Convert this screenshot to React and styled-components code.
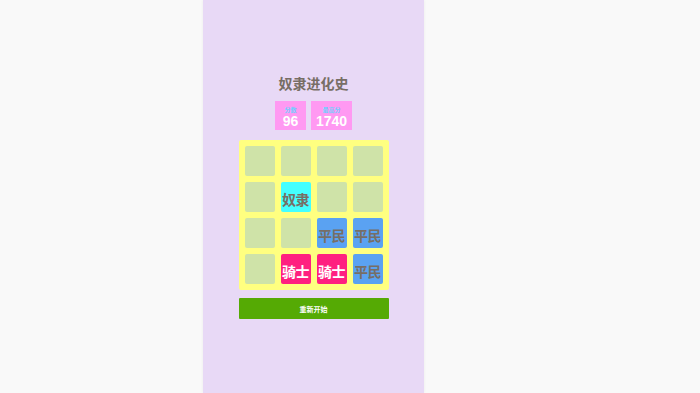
import React from 'react';
import styled, { createGlobalStyle } from 'styled-components';

const GlobalStyle = createGlobalStyle`
  html, body {
    margin: 0;
    padding: 0;
    background: #f9f9f9;
    font-family: "Noto Sans CJK SC", "Liberation Sans", sans-serif;
  }
`;

const Page = styled.div`
  height: 393px;
  display: flex;
  padding-left: 203px;
`;

const Panel = styled.div`
  width: 221px;
  height: 393px;
  background: #e8d9f6;
  box-shadow: 0 0 3px rgba(0, 0, 0, 0.06);
  display: flex;
  flex-direction: column;
  align-items: center;
  padding-top: 72px;
  box-sizing: border-box;
`;

const Title = styled.h1`
  margin: 0;
  font-size: 14px;
  line-height: 22px;
  font-weight: bold;
  color: #776e65;
`;

const Scores = styled.div`
  display: flex;
  gap: 5px;
  margin-top: 7px;
`;

const ScoreBox = styled.div`
  background: #ff99f2;
  min-width: 31px;
  height: 29px;
  padding: 0 5px;
  box-sizing: border-box;
  display: flex;
  flex-direction: column;
  align-items: center;
  justify-content: flex-start;
`;

const ScoreLabel = styled.div`
  font-size: 6px;
  line-height: 6px;
  margin-top: 6px;
  color: #6fcfff;
  font-weight: bold;
`;

const ScoreValue = styled.div`
  font-family: "Liberation Sans", "Noto Sans CJK SC", sans-serif;
  font-size: 14px;
  line-height: 17px;
  font-weight: bold;
  color: #ffffff;
`;

const Board = styled.div`
  margin-top: 10px;
  width: 150px;
  height: 150px;
  box-sizing: border-box;
  padding: 6px;
  background: #ffff80;
  border-radius: 2px;
  display: grid;
  grid-template-columns: repeat(4, 1fr);
  grid-template-rows: repeat(4, 1fr);
  gap: 6px;
`;

const tileColors = {
  0: { bg: '#cfe3a8', fg: '#776e65' },
  '奴隶': { bg: '#44ffff', fg: '#776e65' },
  '平民': { bg: '#5aa2f2', fg: '#776e65' },
  '骑士': { bg: '#ff2080', fg: '#ffffff' },
};

const Cell = styled.div`
  background: ${(p) => tileColors[p.$kind].bg};
  color: ${(p) => tileColors[p.$kind].fg};
  border-radius: 2px;
  display: flex;
  align-items: center;
  justify-content: center;
  font-size: 14px;
  font-weight: bold;
  padding-top: 3px;
  box-sizing: border-box;
  letter-spacing: -0.5px;
`;

const RestartButton = styled.button`
  margin-top: 8px;
  width: 150px;
  height: 21px;
  border: none;
  border-radius: 1px;
  background: #55aa04;
  color: #ffffff;
  font-family: "Noto Sans CJK SC", sans-serif;
  font-size: 7px;
  font-weight: bold;
  padding: 0;
`;

const board = [
  [0, 0, 0, 0],
  [0, '奴隶', 0, 0],
  [0, 0, '平民', '平民'],
  [0, '骑士', '骑士', '平民'],
];

export default function App() {
  return (
    <>
      <GlobalStyle />
      <Page>
        <Panel>
          <Title>奴隶进化史</Title>
          <Scores>
            <ScoreBox>
              <ScoreLabel>分数</ScoreLabel>
              <ScoreValue>96</ScoreValue>
            </ScoreBox>
            <ScoreBox>
              <ScoreLabel>最高分</ScoreLabel>
              <ScoreValue>1740</ScoreValue>
            </ScoreBox>
          </Scores>
          <Board>
            {board.flat().map((v, i) => (
              <Cell key={i} $kind={v}>{v || ''}</Cell>
            ))}
          </Board>
          <RestartButton>重新开始</RestartButton>
        </Panel>
      </Page>
    </>
  );
}
